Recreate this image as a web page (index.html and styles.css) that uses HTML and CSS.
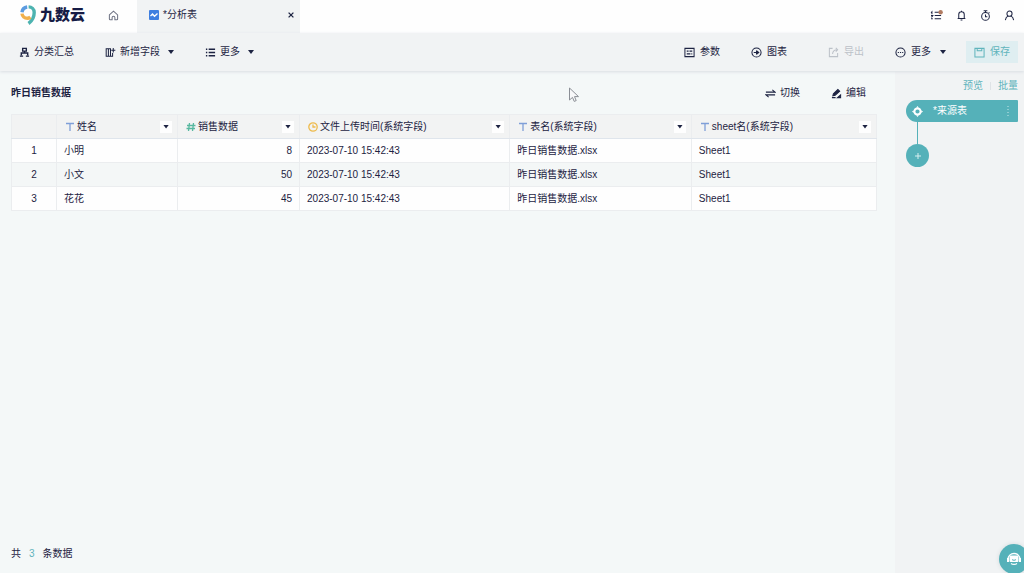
FILE: index.html
```html
<!DOCTYPE html>
<html lang="zh-CN">
<head>
<meta charset="utf-8">
<title>九数云 - 分析表</title>
<meta name="viewport" content="width=device-width, initial-scale=1">
<link rel="stylesheet" href="styles.css">
</head>
<body>
<div class="app">
  <header class="topbar">
    <a class="logo" href="#">
      <svg class="logo-mark" viewBox="0 0 16 20" fill="none" stroke-width="3.400">
        <path d="M2 7.200A6 6 0 0 1 7.200 2" stroke="#5b9be0"/>
        <path d="M8.600 1.900a5.600 5.600 0 0 1 5.600 5.600c0 5-2.200 8.500-5.700 11" stroke="#4db3b0"/>
        <path d="M2 8.600c.3 2.700 2.500 4.600 5.400 4.600 1.300 0 2.200-.4 3-1.100" stroke="#f0b04c"/>
      </svg>
      <span>九数云</span>
    </a>
    <button class="icon-btn home" aria-label="首页">
      <svg class="icon" viewBox="0 0 12 12"><path d="M1.500 5.300 6 1.300l4.500 4v4.500a.9.900 0 0 1-.9.900H7.500V8.300a1.500 1.500 0 0 0-3 0v2.400H2.400a.9.900 0 0 1-.9-.9z"/></svg>
    </button>
    <div class="tab">
      <svg class="tab-icon" viewBox="0 0 10 10"><rect width="10" height="10" rx="1" fill="#3f7fe0"/><path d="M1.500 6 3.500 4l2 2.300L8.500 3.500" fill="none" stroke="#fff" stroke-width="1.300"/></svg>
      <span>*分析表</span>
      <button class="icon-btn tab-close" aria-label="关闭">
        <svg viewBox="0 0 6 6"><path d="m.6.600 4.800 4.800M5.400.6.600 5.400" stroke="currentColor" stroke-width="1.300"/></svg>
      </button>
    </div>
    <nav class="user-tools">
      <button class="icon-btn" aria-label="任务">
        <svg class="icon wide" viewBox="0 0 14 12"><path d="M5 2.500h5M5 6h7M5 9.500h7M1 3l1-1v2.500M1 6h2L1.500 8M1 9.500h2" /><circle cx="11.500" cy="2.500" r="2.400" fill="#b07a60" stroke="none"/></svg>
      </button>
      <button class="icon-btn" aria-label="通知">
        <svg class="icon" viewBox="0 0 12 12"><path d="M3 9V5a3 3 0 0 1 6 0v4M1.800 9.200h8.400M5 11h2M6 2V.8"/></svg>
      </button>
      <button class="icon-btn" aria-label="计时">
        <svg class="icon" viewBox="0 0 12 12"><circle cx="6" cy="7" r="4.200"/><path d="M4 .8h4M6 1v2M6 5v2.300h2M9.500 2.500l.8.800"/></svg>
      </button>
      <button class="icon-btn" aria-label="账户">
        <svg class="icon" viewBox="0 0 12 12"><circle cx="6" cy="4" r="2.800"/><path d="M1.500 11c.3-2.400 1.500-3.900 3-4.600M10.500 11c-.3-2.400-1.500-3.900-3-4.600"/></svg>
      </button>
    </nav>
  </header>

  <div class="toolbar">
    <div class="tools-left">
      <button class="tool">
        <svg class="icon bold" viewBox="0 0 12 12"><path d="M4 1.500h4v3H4zM6 4.500v2M2.500 9V6.500h7V9M1 10h3.500M7.500 10H11"/></svg>
        分类汇总
      </button>
      <button class="tool">
        <svg class="icon" viewBox="0 0 12 12"><path d="M1.300 1.800h2.400v8.400H1.300zM3.700 10.200h4.600V6.500M6 10.200V1.800H3.700M9 1v5M6.800 3.500h4.500"/></svg>
        新增字段<i class="caret"></i>
      </button>
      <button class="tool">
        <svg class="icon bold" viewBox="0 0 12 12"><path d="M1 2.500h1.500M4 2.500h7M1 6h1.500M4 6h7M1 9.500h1.500M4 9.500h7"/></svg>
        更多<i class="caret"></i>
      </button>
    </div>
    <div class="tools-right">
      <button class="tool">
        <svg class="icon" viewBox="0 0 12 12"><path d="M1 1.500h10v9H1zM3 4.500h2M6 4.500h3M3 7.500h4M8 7.500h1"/></svg>
        参数
      </button>
      <button class="tool">
        <svg class="icon" viewBox="0 0 12 12"><circle cx="6" cy="6" r="5"/><path d="M3 6h5.500M6 3.700v4.600M6 4l2.500 2L6 8"/></svg>
        图表
      </button>
      <button class="tool export" disabled>
        <svg class="icon" viewBox="0 0 12 12"><path d="M5 1.500H1.500v9h9V6.500M5 7.500c0-3 2-4.500 5-4.500M8.500 1l2 2-2 2"/></svg>
        导出
      </button>
      <button class="tool">
        <svg class="icon" viewBox="0 0 12 12"><circle cx="6" cy="6" r="5"/><path d="M3 6h1.300M5.400 6h1.300M7.800 6H9"/></svg>
        更多<i class="caret"></i>
      </button>
      <button class="tool save">
        <svg class="icon" viewBox="0 0 12 12"><path d="M1 1.500h10v9.500H1zM3.500 1.500v2.500h5V1.500"/></svg>
        保存
      </button>
    </div>
  </div>

  <div class="workspace">
    <main class="content">
      <div class="table-head">
        <h1>昨日销售数据</h1>
        <div class="table-actions">
          <button class="tool">
            <svg class="icon" viewBox="0 0 12 12"><path d="M1 4.500h10L8 2M11 7.500H1L4 10"/></svg>
            切换
          </button>
          <button class="tool">
            <svg class="icon" viewBox="0 0 12 12"><path d="m2 8.500.6-2.300L7.500 1.500l2 2L4.500 8zM1 10.500h4M7 10.500h3.500V7.500z" fill="currentColor"/></svg>
            编辑
          </button>
        </div>
      </div>
      <table class="data">
        <colgroup><col class="c-no"><col class="c-name"><col class="c-num"><col class="c-time"><col class="c-file"><col class="c-sheet"></colgroup>
        <thead>
          <tr>
            <th></th>
            <th><div class="th"><svg class="type blue" viewBox="0 0 10 10"><path d="M1 1.500h8M5 1.500V9"/></svg><span>姓名</span><button class="filter" aria-label="筛选"><i class="caret"></i></button></div></th>
            <th><div class="th"><svg class="type green" viewBox="0 0 10 10"><path d="M3.500 1 2.500 9M7.500 1l-1 8M1 3.500h8.500M.5 6.500H9"/></svg><span>销售数据</span><button class="filter" aria-label="筛选"><i class="caret"></i></button></div></th>
            <th><div class="th"><svg class="type amber" viewBox="0 0 10 10"><circle cx="5" cy="5" r="4.200"/><path d="M5 2.500V5h2.500"/></svg><span>文件上传时间(系统字段)</span><button class="filter" aria-label="筛选"><i class="caret"></i></button></div></th>
            <th><div class="th"><svg class="type blue" viewBox="0 0 10 10"><path d="M1 1.500h8M5 1.500V9"/></svg><span>表名(系统字段)</span><button class="filter" aria-label="筛选"><i class="caret"></i></button></div></th>
            <th><div class="th"><svg class="type blue" viewBox="0 0 10 10"><path d="M1 1.500h8M5 1.500V9"/></svg><span>sheet名(系统字段)</span><button class="filter" aria-label="筛选"><i class="caret"></i></button></div></th>
          </tr>
        </thead>
        <tbody>
          <tr><td class="no">1</td><td>小明</td><td class="num">8</td><td>2023-07-10 15:42:43</td><td>昨日销售数据.xlsx</td><td>Sheet1</td></tr>
          <tr><td class="no">2</td><td>小文</td><td class="num">50</td><td>2023-07-10 15:42:43</td><td>昨日销售数据.xlsx</td><td>Sheet1</td></tr>
          <tr><td class="no">3</td><td>花花</td><td class="num">45</td><td>2023-07-10 15:42:43</td><td>昨日销售数据.xlsx</td><td>Sheet1</td></tr>
        </tbody>
      </table>
      <footer class="summary"><span>共</span><span class="count">3</span><span>条数据</span></footer>
    </main>

    <aside class="steps">
      <div class="step-links"><a href="#">预览</a><i class="split"></i><a href="#">批量</a></div>
      <div class="step">
        <svg class="step-icon" viewBox="0 0 12 12"><circle cx="6" cy="6" r="3.300" fill="none" stroke="#fff" stroke-width="2"/><path d="M6 0l1.500 2h-3zM6 12l1.500-2h-3zM0 6l2-1.500v3zM12 6l-2-1.500v3z" fill="#fff"/></svg>
        <span>*来源表</span>
        <button class="icon-btn step-menu" aria-label="步骤菜单"><svg viewBox="0 0 2 10"><path d="M1 0v10" stroke="#c9e8ea" stroke-dasharray="1 2"/></svg></button>
      </div>
      <i class="link-line"></i>
      <button class="add-step" aria-label="添加步骤"><svg viewBox="0 0 8 8"><path d="M4 1v6M1 4h6" stroke="#d6eff0"/></svg></button>
    </aside>
  </div>

  <button class="support" aria-label="客服">
    <svg viewBox="0 0 16 16"><path d="M2 8a6 5.500 0 0 1 12 0" fill="none" stroke="#fff" stroke-width="1.300"/><rect x="3.500" y="4.500" width="9" height="6.500" rx="1" fill="#fff"/><path d="M1 7h2v4H1zM13 7h2v4h-2z" fill="#fff"/><path d="M5 12.500c1.500 1 4.500 1 6 0" fill="none" stroke="#fff" stroke-width="1.300"/><path d="M6 8.500c1 1 3 1 4 0" fill="none" stroke="#55b1b9"/></svg>
  </button>
  <svg class="pointer" viewBox="0 0 12 16"><path d="M1.500 1v12l3-2.600 1.700 4 2-.8-1.700-4h4z" fill="#f8f9fa" stroke="#8b8f96"/></svg>
</div>
</body>
</html>
```
FILE: styles.css
```css
* { box-sizing: border-box; }

body {
  margin: 0;
  font: 10px/16px "Liberation Sans", "Noto Sans CJK SC", sans-serif;
  color: #1d2342;
  background: #f4f8f8;
}

button {
  margin: 0;
  padding: 0;
  border: 0;
  background: none;
  font: inherit;
  color: inherit;
}

a { color: inherit; text-decoration: none; }
svg { display: block; flex: none; }

.app {
  position: relative;
  display: flex;
  flex-direction: column;
  min-height: 100vh;
  overflow: hidden;
}

.icon {
  width: 11px;
  height: 11px;
  fill: none;
  stroke: currentColor;
  stroke-width: 1.1;
}
.icon.bold { stroke-width: 1.5; }
.icon.wide { width: 13px; }

.icon-btn { display: flex; align-items: center; justify-content: center; }

.caret {
  width: 6px;
  height: 4px;
  background: currentColor;
  clip-path: polygon(0 0, 100% 0, 50% 100%);
}

/* Top bar */
.topbar {
  display: flex;
  align-items: stretch;
  height: 33px;
  padding-left: 20px;
  background: #fefefe;
}

.logo {
  display: flex;
  align-items: center;
  gap: 4px;
  width: 87px;
  padding-bottom: 3px;
  font-size: 15px;
  font-weight: 900;
  color: #161b45;
}
.logo-mark { width: 16px; height: 20px; }

.home { width: 12px; padding-bottom: 3px; color: #6d7182; }

.tab {
  display: flex;
  align-items: center;
  gap: 4px;
  width: 163px;
  margin-left: 18px;
  padding: 0 6px 4px 12px;
  background: #f1f3f4;
}
.tab-icon { width: 10px; height: 10px; }
.tab-close { margin-left: auto; }
.tab-close svg { width: 6px; height: 6px; }

.user-tools {
  display: flex;
  gap: 13px;
  margin-left: auto;
  padding: 0 9px 3px 0;
}

/* Toolbar */
.toolbar {
  position: relative;
  display: flex;
  justify-content: space-between;
  align-items: center;
  height: 38px;
  padding: 0 6px 0 19px;
  background: #f1f3f4;
  box-shadow: 0 1px 3px #d9dde3;
}

.tools-left, .tools-right { display: flex; align-items: center; gap: 31px; }

.tool {
  display: flex;
  align-items: center;
  gap: 4px;
  white-space: nowrap;
}
.tool .caret { margin-left: 4px; }
.tools-right .tool { gap: 5px; }

.export { margin-left: 10px; color: #bcc1c8; }

.save {
  height: 22px;
  margin-left: -11px;
  padding: 0 8px;
  background: #dfeef1;
  color: #5fb4bc;
}

/* Workspace */
.workspace { display: flex; flex: 1; }

.content {
  display: flex;
  flex: 1;
  flex-direction: column;
  min-width: 0;
  padding: 9px 18px 11px 11px;
}

.table-head {
  display: flex;
  align-items: center;
  justify-content: space-between;
  height: 26px;
  margin-bottom: 8px;
  padding-right: 11px;
}
.table-head h1 { margin: 0; font-size: 10px; font-weight: 700; }
.table-actions { display: flex; gap: 31px; }

.data {
  width: 100%;
  table-layout: fixed;
  border-collapse: collapse;
}
.c-no { width: 5.2%; }
.c-name { width: 14%; }
.c-num { width: 14.1%; }
.c-time { width: 24.3%; }
.c-file { width: 21%; }
.c-sheet { width: 21.4%; }

.data th, .data td {
  height: 24px;
  padding: 0 7px;
  border: 1px solid #ebedef;
  font-weight: 400;
  text-align: left;
}
.data th {
  padding: 0 5px 0 8px;
  background: #f2f3f3;
  border-bottom-color: #dfe5ec;
}
.data td { background: #fefefe; }
.data tr:nth-child(2) td { background: #f4f7f7; }
.data .no { text-align: center; }
.data .num { text-align: right; }

.th { display: flex; align-items: center; gap: 2px; white-space: nowrap; }
.type { width: 10px; height: 10px; fill: none; stroke: currentColor; stroke-width: 1.3; }
.blue { color: #7f9fd8; }
.green { color: #58b8a0; }
.amber { color: #eebb4d; }

.filter {
  display: flex;
  align-items: center;
  justify-content: center;
  width: 12px;
  height: 12px;
  margin-left: auto;
  background: #fefefe;
}

.summary { display: flex; gap: 8px; margin-top: auto; }
.count { color: #5fb4bc; }

/* Step panel */
.steps {
  display: flex;
  flex-direction: column;
  width: 129px;
  padding: 7px 6px 0 11px;
  background: #f1f3f4;
}

.step-links {
  display: flex;
  align-items: center;
  justify-content: flex-end;
  gap: 7px;
  margin-bottom: 6px;
  color: #5fb4bc;
}
.split { width: 1px; height: 8px; background: #dfe3e6; }

.step {
  display: flex;
  align-items: center;
  height: 22px;
  padding: 0 9px 0 6px;
  border-radius: 11px 1px 1px 11px;
  background: #55b1b9;
  color: #fff;
}
.step-icon { width: 11px; height: 11px; margin-right: 10px; }
.step-menu { margin-left: auto; }
.step-menu svg { width: 2px; height: 10px; }

.link-line { width: 1px; height: 22px; margin-left: 11px; background: #55b1b9; }

.add-step {
  display: flex;
  align-items: center;
  justify-content: center;
  width: 23px;
  height: 23px;
  border-radius: 50%;
  background: #55b1b9;
}
.add-step svg { width: 8px; height: 8px; }

/* Floating layer */
.support {
  position: absolute;
  right: -5px;
  bottom: -1px;
  display: flex;
  align-items: center;
  justify-content: center;
  width: 30px;
  height: 30px;
  border-radius: 50%;
  background: #55b1b9;
  box-shadow: 0 0 4px #d3dadd;
}
.support svg { width: 16px; height: 16px; }

.pointer {
  position: absolute;
  left: 568px;
  top: 87px;
  width: 12px;
  height: 16px;
}
```
